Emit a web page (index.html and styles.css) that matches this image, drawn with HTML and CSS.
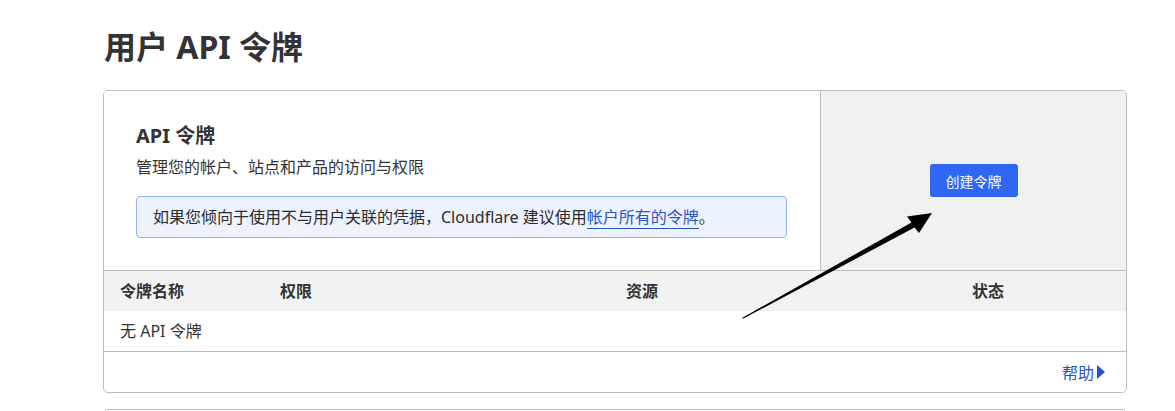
FILE: index.html
```html
<!DOCTYPE html>
<html lang="zh-CN">
<head>
  <meta charset="UTF-8">
  <title>用户 API 令牌</title>
  <link rel="stylesheet" href="styles.css">
</head>
<body>
  <main class="page">
    <h1 class="page-title">用户 API 令牌</h1>

    <section class="card">
      <div class="card-top">
        <div class="intro">
          <h2 class="intro-title">API 令牌</h2>
          <p class="intro-desc">管理您的帐户、站点和产品的访问与权限</p>
          <div class="notice">如果您倾向于使用不与用户关联的凭据，Cloudflare 建议使用<a href="#" class="notice-link">帐户所有的令牌</a>。</div>
        </div>
        <div class="actions">
          <button class="btn-primary">创建令牌</button>
        </div>
      </div>

      <div class="table-head">
        <span>令牌名称</span>
        <span>权限</span>
        <span>资源</span>
        <span>状态</span>
      </div>
      <div class="table-row">无 API 令牌</div>

      <div class="card-foot">
        <a href="#" class="help-link">帮助 <span class="tri"></span></a>
      </div>
    </section>

    <section class="card card-next"></section>
  </main>

  <svg class="annotation" width="1175" height="411" viewBox="0 0 1175 411">
    <polygon points="742,318 911.5,222.5 907,216.5 932,213 919,233 914.5,227.5 743.5,318.5" fill="#000"/>
  </svg>
</body>
</html>
```

FILE: styles.css
```css
* {
  margin: 0;
  padding: 0;
  box-sizing: border-box;
}

body {
  background: #fff;
  font-family: "Noto Sans", "Noto Sans CJK SC", sans-serif;
  color: #333;
  overflow: hidden;
}

.page {
  margin-left: 103px;
  width: 1024px;
}

.page-title {
  font-size: 32px;
  font-weight: 700;
  line-height: 44px;
  padding-top: 25px;
  height: 90px;
  padding-left: 1px;
  color: #333;
}

.card {
  border: 1px solid #bdbdbd;
  border-radius: 5px;
  overflow: hidden;
}

.card-top {
  display: flex;
  height: 179px;
}

.intro {
  width: 716px;
  padding: 30px 32px 0 32px;
  background: #fff;
}

.intro-title {
  font-size: 20px;
  font-weight: 700;
  line-height: 30px;
}

.intro-desc {
  font-size: 16px;
  line-height: 24px;
  margin-top: 4px;
}

.notice {
  margin-top: 17px;
  width: 651px;
  height: 42px;
  padding: 0 16px;
  background: #edf3fe;
  border: 1px solid #8fb2f4;
  border-radius: 4px;
  font-size: 16px;
  line-height: 40px;
  color: #2b2b2b;
}

.notice-link {
  color: #2a55c9;
  text-decoration: none;
  border-bottom: 1px solid #2a55c9;
}

.actions {
  flex: 1;
  background: #f1f1f1;
  border-left: 1px solid #bdbdbd;
  display: flex;
  justify-content: center;
  padding-top: 73px;
}

.btn-primary {
  width: 88px;
  height: 33px;
  background: #2f66f5;
  color: #fff;
  border: none;
  border-radius: 3px;
  font-family: inherit;
  font-size: 14px;
}

.table-head {
  display: grid;
  grid-template-columns: 160px 346px 346px 1fr;
  height: 41px;
  padding-left: 16px;
  background: #f2f2f2;
  border-top: 1px solid #bdbdbd;
  font-size: 16px;
  font-weight: 700;
  line-height: 40px;
}

.table-row {
  height: 41px;
  padding-left: 16px;
  font-size: 16px;
  line-height: 40px;
  border-bottom: 1px solid #bdbdbd;
}

.card-foot {
  height: 40px;
  display: flex;
  justify-content: flex-end;
  align-items: center;
  padding-right: 21px;
}

.help-link {
  color: #2552c6;
  text-decoration: none;
  font-size: 16px;
  display: flex;
  align-items: center;
  gap: 3px;
}

.tri {
  width: 0;
  height: 0;
  border-top: 7px solid transparent;
  border-bottom: 7px solid transparent;
  border-left: 8px solid #2552c6;
}

.card-next {
  margin-top: 16px;
  height: 40px;
}

.annotation {
  position: absolute;
  left: 0;
  top: 0;
  pointer-events: none;
}
```
